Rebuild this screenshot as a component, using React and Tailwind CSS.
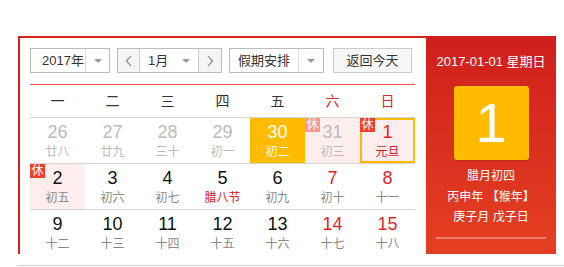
import React from "react";

const FONT = { fontFamily: '"Liberation Sans", Arial, "Noto Sans CJK SC", sans-serif' };

const rows = [
  [
    { n: "26", l: "廿八", prev: true },
    { n: "27", l: "廿九", prev: true },
    { n: "28", l: "三十", prev: true },
    { n: "29", l: "初一", prev: true },
    { n: "30", l: "初二", today: true },
    { n: "31", l: "初三", prev: true, rest: true, pink: true },
    { n: "1", l: "元旦", sel: true, rest: true, red: true, redL: true },
  ],
  [
    { n: "2", l: "初五", rest: true, pink: true },
    { n: "3", l: "初六" },
    { n: "4", l: "初七" },
    { n: "5", l: "腊八节", redL: true },
    { n: "6", l: "初九" },
    { n: "7", l: "初十", red: true },
    { n: "8", l: "十一", red: true },
  ],
  [
    { n: "9", l: "十二" },
    { n: "10", l: "十三" },
    { n: "11", l: "十四" },
    { n: "12", l: "十五" },
    { n: "13", l: "十六" },
    { n: "14", l: "十七", red: true },
    { n: "15", l: "十八", red: true },
  ],
];

function Tri() {
  return (
    <span className="inline-block w-0 h-0 border-l-[4px] border-r-[4px] border-t-[4px] border-l-transparent border-r-transparent border-t-[#999]" />
  );
}

function Chev({ dir }) {
  return (
    <svg width="8" height="12" viewBox="0 0 8 12">
      <polyline
        points={dir === "l" ? "6,1 1.5,6 6,11" : "2,1 6.5,6 2,11"}
        fill="none"
        stroke="#777"
        strokeWidth="1.1"
      />
    </svg>
  );
}

function Cell({ d }) {
  let bg = "";
  if (d.today) bg = "bg-[#ffbb00]";
  else if (d.pink || d.sel) bg = "bg-[#fdeeee]";
  let nc = "text-[#111]";
  let lc = "text-[#888]";
  if (d.prev) {
    nc = "text-[#bbb]";
    lc = "text-[#bbb]";
  }
  if (d.today) {
    nc = "text-white";
    lc = "text-white";
  }
  if (d.red) nc = "text-[#e0262a]";
  if (d.redL) lc = "text-[#d9181e]";
  return (
    <div className={`relative h-[45px] flex flex-col items-center pt-[4px] ${bg} ${d.sel ? "shadow-[inset_0_0_0_2px_#ffbb00]" : ""}`}>
      {d.rest && (
        <div
          className={`absolute top-0 left-0 w-[15px] h-[14px] text-[12px] leading-[14px] text-white text-center ${
            d.prev ? "bg-[#f29a94]" : "bg-[#f2402f]"
          }`}
        >
          休
        </div>
      )}
      <div className={`text-[18px] leading-[20px] ${nc}`}>{d.n}</div>
      <div className={`text-[12px] leading-[16px] mt-[2px] ${lc}`}>{d.l}</div>
    </div>
  );
}

export default function App() {
  const weeks = ["一", "二", "三", "四", "五", "六", "日"];
  return (
    <div className="w-[564px] h-[267px] bg-white overflow-hidden" style={FONT}>
      <div className="pt-[36px] pl-[18px]">
        <div className="flex w-[538px] h-[218px]">
          <div className="w-[408px] h-[218px] border-l-2 border-t-2 border-[#d4221b] overflow-hidden pl-[10px] pt-[10px]">
            {/* controls */}
            <div className="flex items-center h-[25px] text-[13px] text-[#333]">
              <div className="flex h-[25px] w-[80px] border border-[#bbb]">
                <div className="w-[55px] flex items-center pl-[11px] border-r border-[#ddd]">2017年</div>
                <div className="flex-1 flex items-center justify-center">
                  <Tri />
                </div>
              </div>
              <div className="flex h-[25px] w-[105px] border border-[#bbb] ml-[7px]">
                <div className="w-[22px] flex items-center justify-center bg-[#f5f5f5] border-r border-[#ccc]">
                  <Chev dir="l" />
                </div>
                <div className="w-[59px] flex items-center justify-between pl-[8px] pr-[8px] border-r border-[#ccc]">
                  <span>1月</span>
                  <Tri />
                </div>
                <div className="flex-1 flex items-center justify-center bg-[#f5f5f5]">
                  <Chev dir="r" />
                </div>
              </div>
              <div className="flex h-[25px] w-[95px] border border-[#bbb] ml-[7px]">
                <div className="w-[69px] flex items-center justify-center border-r border-[#ddd]">假期安排</div>
                <div className="flex-1 flex items-center justify-center">
                  <Tri />
                </div>
              </div>
              <div className="flex h-[25px] w-[79px] border border-[#ccc] bg-[#f7f7f7] ml-[9px] items-center justify-center">
                返回今天
              </div>
            </div>
            {/* red line */}
            <div className="w-[385px] h-px bg-[#f0524a] mt-[11px]" />
            {/* weekdays */}
            <div className="w-[385px] grid grid-cols-7 h-[33px] border-b border-[#d5d5d5] text-[14px]">
              {weeks.map((w, i) => (
                <div key={w} className={`flex items-center justify-center ${i >= 5 ? "text-[#e0262a]" : "text-[#333]"}`}>
                  {w}
                </div>
              ))}
            </div>
            {rows.map((r, ri) => (
              <div key={ri} className="w-[385px] grid grid-cols-7 border-b border-[#d5d5d5]">
                {r.map((d) => (
                  <Cell key={d.n + d.l} d={d} />
                ))}
              </div>
            ))}
          </div>
          <div className="w-[130px] h-[218px] overflow-hidden bg-gradient-to-b from-[#cf1e1b] to-[#e43f22] flex flex-col items-center pt-[17px]">
            <div className="text-[13px] leading-[18px] text-white">2017-01-01 星期日</div>
            <div className="mt-[15px] w-[75px] h-[74px] rounded-[3px] bg-[#ffbb00] shadow-[0_1px_1px_rgba(150,40,0,0.35)] flex items-center justify-center text-white text-[56px] leading-none">
              1
            </div>
            <div className="mt-[6px] text-[12px] leading-[20.5px] text-white text-center">
              <div>腊月初四</div>
              <div>丙申年 【猴年】</div>
              <div>庚子月 戊子日</div>
            </div>
            <div className="mt-[9px] w-[110px] h-[2px] bg-[rgba(255,255,255,0.35)]" />
          </div>
        </div>
      </div>
      <div className="ml-[17px] mt-[11px] border-t border-[#d0d0d0]" />
    </div>
  );
}
